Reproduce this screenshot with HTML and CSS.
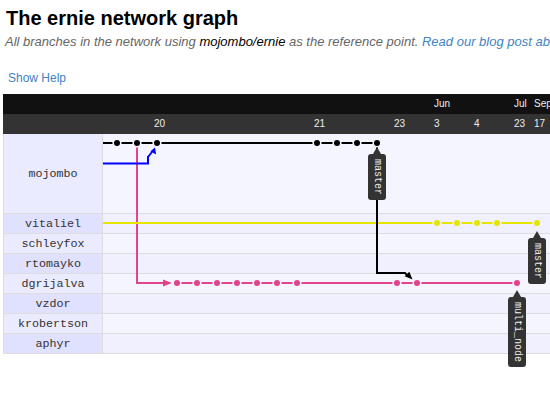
FILE: index.html
```html
<!DOCTYPE html>
<html>
<head>
<meta charset="utf-8">
<link rel="stylesheet" href="styles.css">
</head>
<body>
<div class="page">
  <h1 class="title">The ernie network graph</h1>
  <p class="sub">All branches in the network using <span class="ref">mojombo/ernie</span> as the reference point. <a class="link" href="#">Read our blog post about how it works.</a></p>
  <p class="help"><a class="link" href="#">Show Help</a></p>

  <div class="network">
    <div class="bar months">
      <span class="tick" style="left:431px">Jun</span>
      <span class="tick" style="left:511px">Jul</span>
      <span class="tick" style="left:531px">Sep</span>
    </div>
    <div class="bar days">
      <span class="tick" style="left:151px">20</span>
      <span class="tick" style="left:311px">21</span>
      <span class="tick" style="left:391px">23</span>
      <span class="tick" style="left:431px">3</span>
      <span class="tick" style="left:471px">4</span>
      <span class="tick" style="left:511px">23</span>
      <span class="tick" style="left:531px">17</span>
    </div>
    <div class="rows">
      <div class="row tall light"><div class="name">mojombo</div><div class="lane"></div></div>
      <div class="row dark"><div class="name">vitaliel</div><div class="lane"></div></div>
      <div class="row light"><div class="name">schleyfox</div><div class="lane"></div></div>
      <div class="row dark"><div class="name">rtomayko</div><div class="lane"></div></div>
      <div class="row light"><div class="name">dgrijalva</div><div class="lane"></div></div>
      <div class="row dark"><div class="name">vzdor</div><div class="lane"></div></div>
      <div class="row light"><div class="name">krobertson</div><div class="lane"></div></div>
      <div class="row dark"><div class="name">aphyr</div><div class="lane"></div></div>
    </div>

    <svg class="overlay" width="547" height="300" viewBox="3 94 547 300">
      <g fill="none" stroke="#e0448f" stroke-width="2">
        <polyline points="137,143 137,283 165,283"/>
        <line x1="177" y1="283" x2="517" y2="283"/>
      </g>
      <polygon points="163,279.5 163,286.5 172,283" fill="#e0448f"/>
      <line x1="103" y1="223" x2="537" y2="223" stroke="#e5e500" stroke-width="2"/>
      <polyline points="103,163.5 148,163.5 148,156" fill="none" stroke="#0000ff" stroke-width="2"/>
      <polygon points="150.4,151.2 156.1,154.6 155,147.5" fill="#0000ff"/>
      <line x1="148" y1="157" x2="152" y2="152" stroke="#0000ff" stroke-width="2"/>
      <g fill="none" stroke="#000" stroke-width="2">
        <line x1="103" y1="143" x2="377" y2="143"/>
        <polyline points="377,143 377,273 405,273 408,276"/>
      </g>
      <polygon points="409.3,271.7 404.7,276.3 412.5,279.5" fill="#000"/>

      <g fill="#000" stroke="#f5f5ff" stroke-width="1.6">
        <circle cx="117" cy="143" r="3.8"/>
        <circle cx="137" cy="143" r="3.8"/>
        <circle cx="157" cy="143" r="3.8"/>
        <circle cx="317" cy="143" r="3.8"/>
        <circle cx="337" cy="143" r="3.8"/>
        <circle cx="357" cy="143" r="3.8"/>
        <circle cx="377" cy="143" r="3.8"/>
      </g>
      <g fill="#e5e500" stroke="#f0f0ff" stroke-width="1.6">
        <circle cx="437" cy="223" r="3.8"/>
        <circle cx="457" cy="223" r="3.8"/>
        <circle cx="477" cy="223" r="3.8"/>
        <circle cx="497" cy="223" r="3.8"/>
        <circle cx="537" cy="223" r="3.8"/>
      </g>
      <g fill="#e0448f" stroke="#f5f5ff" stroke-width="1.6">
        <circle cx="177" cy="283" r="3.8"/>
        <circle cx="197" cy="283" r="3.8"/>
        <circle cx="217" cy="283" r="3.8"/>
        <circle cx="237" cy="283" r="3.8"/>
        <circle cx="257" cy="283" r="3.8"/>
        <circle cx="277" cy="283" r="3.8"/>
        <circle cx="297" cy="283" r="3.8"/>
        <circle cx="397" cy="283" r="3.8"/>
        <circle cx="417" cy="283" r="3.8"/>
        <circle cx="517" cy="283" r="3.8"/>
      </g>
    </svg>

    <div class="badge" style="left:365px;top:60px">master</div>
    <div class="badge" style="left:525px;top:144px">master</div>
    <div class="badge" style="left:505px;top:203px">multi_node</div>
  </div>
</div>
</body>
</html>
```
FILE: styles.css
```css
html {
  overflow: hidden;
}
body {
  margin: 0;
  padding: 0;
  background: #fff;
  min-height: 400px;
}
.page {
  font-family: "Liberation Sans", Arial, sans-serif;
  width: 550px;
}
.title {
  margin: 5px 0 0 6px;
  font-size: 20px;
  line-height: 26px;
  font-weight: bold;
  color: #000;
  white-space: nowrap;
}
.sub {
  margin: 3px 0 0 5px;
  font-size: 13px;
  line-height: 16px;
  font-style: italic;
  color: #666;
  white-space: nowrap;
}
.ref {
  color: #000;
}
.link {
  color: #4183c4;
  text-decoration: none;
}
.help {
  margin: 21px 0 0 8px;
  font-size: 12px;
  line-height: 15px;
}
.network {
  position: relative;
  margin: 8px 0 0 3px;
  width: 620px;
}
.bar {
  position: relative;
  height: 20px;
  font-size: 10px;
  line-height: 20px;
  color: #eee;
}
.months {
  background: #111;
}
.days {
  background: #333;
}
.tick {
  position: absolute;
  top: 0;
}
.rows {
  display: flex;
  flex-direction: column;
}
.row {
  display: grid;
  grid-template-columns: 100px 1fr;
  height: 19px;
  border-bottom: 1px solid #ddd;
}
.row.tall {
  height: 79px;
}
.name {
  display: flex;
  align-items: center;
  justify-content: center;
  border-left: 1px solid #ddd;
  border-right: 1px solid #ddd;
  font-family: "Courier New", "Nimbus Mono PS", "FreeMono", "Liberation Mono", monospace;
  font-size: 11.7px;
  color: #333;
}
.light .name { background: #ebebff; }
.dark .name { background: #e0e0ff; }
.light .lane { background: #f5f5ff; }
.dark .lane { background: #f0f0ff; }
.overlay {
  position: absolute;
  left: 0;
  top: 0;
}
.badge {
  position: absolute;
  width: 18px;
  padding: 5px 0;
  background: #333;
  border-radius: 3px;
  color: #eee;
  font-family: "Courier New", "Nimbus Mono PS", "FreeMono", "Liberation Mono", monospace;
  font-size: 10px;
  line-height: 18px;
  writing-mode: vertical-rl;
  text-align: center;
}
.badge::before {
  content: "";
  position: absolute;
  left: 5px;
  top: -7px;
  border-left: 4px solid transparent;
  border-right: 4px solid transparent;
  border-bottom: 7px solid #333;
}
```
